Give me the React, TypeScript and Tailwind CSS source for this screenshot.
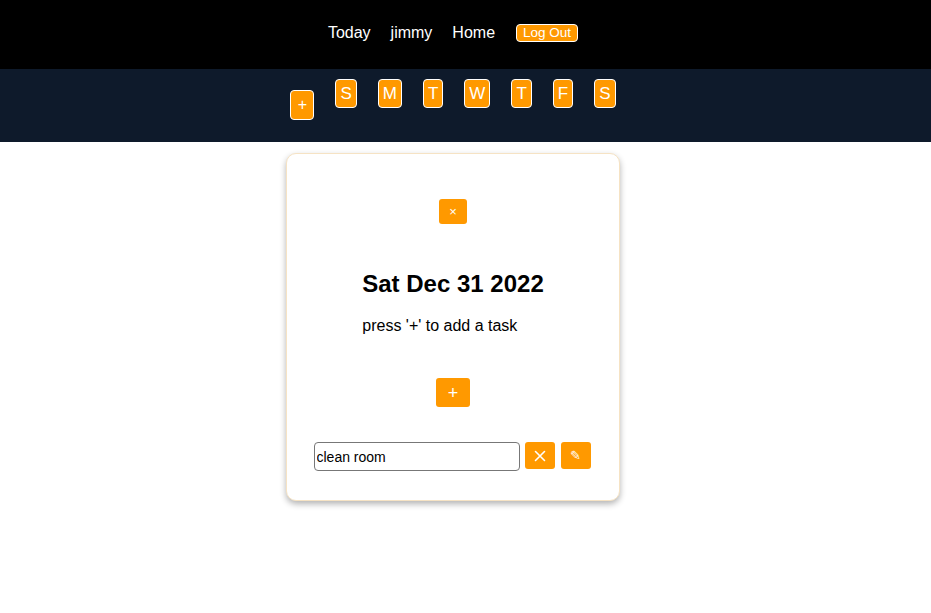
import React, { useState } from "react";

const days = ["S", "M", "T", "W", "T", "F", "S"];

export default function App() {
  const [task, setTask] = useState("clean room");

  return (
    <div className="min-h-screen bg-white font-['Liberation_Sans',Arial,sans-serif] text-black">
      {/* Top nav */}
      <div className="h-[69px] bg-black flex justify-center pr-[25px]">
        <div className="flex items-center gap-[20px] text-white text-[16px] pb-[3px]">
          <span>Today</span>
          <span>jimmy</span>
          <span>Home</span>
          <button className="ml-[1px] h-[18px] px-[6px] bg-[#ff9900] border border-white rounded-[4px] text-[13.5px] leading-[16px] text-white">
            Log Out
          </button>
        </div>
      </div>

      {/* Week bar */}
      <div className="h-[73px] bg-[#0e1a2b] flex justify-center pr-[25px]">
        <div className="flex items-start gap-[21px] pt-[10px]">
          <button className="mt-[11px] w-[24px] h-[30px] bg-[#ff9900] border border-white rounded-[4px] text-white text-[16px]">
            +
          </button>
          {days.map((d, i) => (
            <button
              key={i}
              className="h-[29px] px-[4px] bg-[#ff9900] border border-white rounded-[4px] text-white text-[17px] leading-[20px]"
            >
              {d}
            </button>
          ))}
        </div>
      </div>

      {/* Day card */}
      <div className="flex justify-center pr-[25px] pt-[11px]">
        <div className="w-[334px] bg-white border border-[#f6e3c4] rounded-[10px] shadow-[0_3px_6px_rgba(0,0,0,0.3)] flex flex-col items-center pt-[45px] pb-[29px]">
          <button className="w-[28px] h-[25px] bg-[#ff9900] rounded-[3px] text-white text-[13px] leading-none">
            ×
          </button>

          <div className="mt-[46px] text-left">
            <h1 className="text-[24px] leading-[28px] font-bold">Sat Dec 31 2022</h1>
            <p className="mt-[19px] text-[16px] leading-[18px]">press '+' to add a task</p>
          </div>

          <button className="mt-[43px] w-[34px] h-[29px] bg-[#ff9900] rounded-[3px] text-white text-[18px] leading-none">
            +
          </button>

          <div className="mt-[35px] flex items-start gap-[5px] ml-[-2px]">
            <input
              value={task}
              onChange={(e) => setTask(e.target.value)}
              className="w-[206px] h-[29px] border border-[#777] rounded-[4px] px-[2px] text-[14px] outline-none"
            />
            <button className="w-[30px] h-[27px] bg-[#ff9900] rounded-[3px] text-white flex items-center justify-center">
              <svg width="12" height="12" viewBox="0 0 12 12" stroke="white" strokeWidth="1.6" strokeLinecap="round">
                <path d="M1.5 1.5 L10.5 10.5 M10.5 1.5 L1.5 10.5" />
              </svg>
            </button>
            <button className="ml-[1px] w-[30px] h-[27px] bg-[#ff9900] rounded-[3px] text-white text-[13px] leading-none">
              ✎
            </button>
          </div>
        </div>
      </div>
    </div>
  );
}
